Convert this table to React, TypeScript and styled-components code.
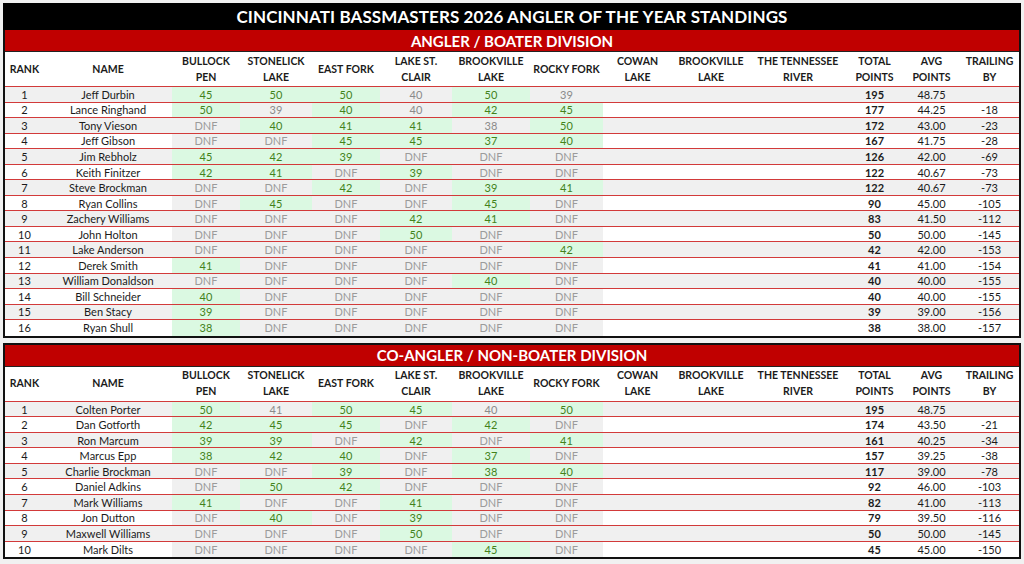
import React from "react";
import styled, { createGlobalStyle } from "styled-components";

const GlobalStyle = createGlobalStyle`
  html, body { margin: 0; padding: 0; background: #f1f1f1; }
  body { font-family: Lato, "Open Sans", Arial, sans-serif; }
  * { box-sizing: border-box; }
`;

const COLS = "39px 128px 68px 72px 68px 72px 78px 73px 69px 78px 96px 57px 57px 1fr";

type Score = number | "DNF";
type Player = {
  name: string;
  scores: Score[];
  counted: boolean[];
  total: number;
  avg: string;
  trail: string;
};

const mk = (name: string, s: Score[], c: string, total: number, avg: string, trail: string): Player => ({
  name,
  scores: s,
  counted: c.split("").map((ch) => ch === "1"),
  total,
  avg,
  trail,
});

const D = "DNF" as const;

const boaters: Player[] = [
  mk("Jeff Durbin", [45, 50, 50, 40, 50, 39], "111010", 195, "48.75", ""),
  mk("Lance Ringhand", [50, 39, 40, 40, 42, 45], "101011", 177, "44.25", "-18"),
  mk("Tony Vieson", [D, 40, 41, 41, 38, 50], "011101", 172, "43.00", "-23"),
  mk("Jeff Gibson", [D, D, 45, 45, 37, 40], "001111", 167, "41.75", "-28"),
  mk("Jim Rebholz", [45, 42, 39, D, D, D], "111000", 126, "42.00", "-69"),
  mk("Keith Finitzer", [42, 41, D, 39, D, D], "110100", 122, "40.67", "-73"),
  mk("Steve Brockman", [D, D, 42, D, 39, 41], "001011", 122, "40.67", "-73"),
  mk("Ryan Collins", [D, 45, D, D, 45, D], "010010", 90, "45.00", "-105"),
  mk("Zachery Williams", [D, D, D, 42, 41, D], "000110", 83, "41.50", "-112"),
  mk("John Holton", [D, D, D, 50, D, D], "000100", 50, "50.00", "-145"),
  mk("Lake Anderson", [D, D, D, D, D, 42], "000001", 42, "42.00", "-153"),
  mk("Derek Smith", [41, D, D, D, D, D], "100000", 41, "41.00", "-154"),
  mk("William Donaldson", [D, D, D, D, 40, D], "000010", 40, "40.00", "-155"),
  mk("Bill Schneider", [40, D, D, D, D, D], "100000", 40, "40.00", "-155"),
  mk("Ben Stacy", [39, D, D, D, D, D], "100000", 39, "39.00", "-156"),
  mk("Ryan Shull", [38, D, D, D, D, D], "100000", 38, "38.00", "-157"),
];

const coAnglers: Player[] = [
  mk("Colten Porter", [50, 41, 50, 45, 40, 50], "101101", 195, "48.75", ""),
  mk("Dan Gotforth", [42, 45, 45, D, 42, D], "111010", 174, "43.50", "-21"),
  mk("Ron Marcum", [39, 39, D, 42, D, 41], "110101", 161, "40.25", "-34"),
  mk("Marcus Epp", [38, 42, 40, D, 37, D], "111010", 157, "39.25", "-38"),
  mk("Charlie Brockman", [D, D, 39, D, 38, 40], "001011", 117, "39.00", "-78"),
  mk("Daniel Adkins", [D, 50, 42, D, D, D], "011000", 92, "46.00", "-103"),
  mk("Mark Williams", [41, D, D, 41, D, D], "100100", 82, "41.00", "-113"),
  mk("Jon Dutton", [D, 40, D, 39, D, D], "010100", 79, "39.50", "-116"),
  mk("Maxwell Williams", [D, D, D, 50, D, D], "000100", 50, "50.00", "-145"),
  mk("Mark Dilts", [D, D, D, D, 45, D], "000010", 45, "45.00", "-150"),
];

const headers: string[][] = [
  ["RANK"],
  ["NAME"],
  ["BULLOCK", "PEN"],
  ["STONELICK", "LAKE"],
  ["EAST FORK"],
  ["LAKE ST.", "CLAIR"],
  ["BROOKVILLE", "LAKE"],
  ["ROCKY FORK"],
  ["COWAN", "LAKE"],
  ["BROOKVILLE", "LAKE"],
  ["THE TENNESSEE", "RIVER"],
  ["TOTAL", "POINTS"],
  ["AVG", "POINTS"],
  ["TRAILING", "BY"],
];

const Page = styled.div`
  width: 1018px;
  margin: 3px 0 0 3px;
  display: flex;
  flex-direction: column;
  gap: 5px;
`;

const Section = styled.section`
  display: flex;
  flex-direction: column;
`;

const TitleBar = styled.div`
  height: 27px;
  background: #000;
  color: #fff;
  font-weight: 700;
  font-size: 17px;
  letter-spacing: 0.1px;
  display: flex;
  align-items: center;
  justify-content: center;
`;

const Panel = styled.div<{ $withTop?: boolean }>`
  border: 2px solid #111;
  border-top: ${(p) => (p.$withTop ? "2px solid #111" : "none")};
  background: #fff;
`;

const DivisionBar = styled.div`
  height: 22px;
  background: #c00000;
  color: #fff;
  font-weight: 700;
  font-size: 15px;
  display: flex;
  align-items: center;
  justify-content: center;
  border-bottom: 1px solid #222;
`;

const HeaderRow = styled.div`
  display: grid;
  grid-template-columns: ${COLS};
  height: 35px;
  background: #fff;
  border-bottom: 1px solid #d23a3a;
`;

const HeadCell = styled.div`
  display: flex;
  flex-direction: column;
  align-items: center;
  justify-content: center;
  font-weight: 700;
  font-size: 10.5px;
  line-height: 16px;
  color: #1b1b1b;
  white-space: nowrap;
  padding-bottom: 1px;
`;

const Row = styled.div<{ $last?: boolean }>`
  display: grid;
  grid-template-columns: ${COLS};
  height: 15.55px;
  border-bottom: ${(p) => (p.$last ? "none" : "1px solid #d23a3a")};
`;

type Kind = "plain" | "win" | "drop";

const Cell = styled.div<{ $kind: Kind; $stripe: boolean; $bold?: boolean; $muted?: boolean }>`
  display: flex;
  align-items: center;
  justify-content: center;
  font-size: 11px;
  line-height: 1;
  white-space: nowrap;
  font-weight: ${(p) => (p.$bold ? 700 : 400)};
  background: ${(p) =>
    p.$kind === "win" ? "#dbf9e2" : p.$kind === "drop" ? "#f0f0f0" : p.$stripe ? "#f0f0f0" : "#fff"};
  color: ${(p) =>
    p.$kind === "win" ? "#43821a" : p.$kind === "drop" ? (p.$muted ? "#9b9b9b" : "#8a8a8a") : "#1b1b1b"};
`;

function Standings({ title, players, withTop }: { title: string; players: Player[]; withTop?: boolean }) {
  return (
    <Panel $withTop={withTop}>
      <DivisionBar>{title}</DivisionBar>
      <HeaderRow>
        {headers.map((h, i) => (
          <HeadCell key={i}>
            {h.map((line, j) => (
              <span key={j}>{line}</span>
            ))}
          </HeadCell>
        ))}
      </HeaderRow>
      {players.map((p, i) => {
        const stripe = i % 2 === 0;
        return (
          <Row key={p.name} $last={i === players.length - 1}>
            <Cell $kind="plain" $stripe={stripe}>{i + 1}</Cell>
            <Cell $kind="plain" $stripe={stripe}>{p.name}</Cell>
            {p.scores.map((s, j) => (
              <Cell
                key={j}
                $kind={p.counted[j] ? "win" : "drop"}
                $stripe={stripe}
                $muted={s === "DNF"}
              >
                {s}
              </Cell>
            ))}
            <Cell $kind="plain" $stripe={stripe} />
            <Cell $kind="plain" $stripe={stripe} />
            <Cell $kind="plain" $stripe={stripe} />
            <Cell $kind="plain" $stripe={stripe} $bold>{p.total}</Cell>
            <Cell $kind="plain" $stripe={stripe}>{p.avg}</Cell>
            <Cell $kind="plain" $stripe={stripe}>{p.trail}</Cell>
          </Row>
        );
      })}
    </Panel>
  );
}

export default function App() {
  return (
    <>
      <GlobalStyle />
      <Page>
        <Section>
          <TitleBar>CINCINNATI BASSMASTERS 2026 ANGLER OF THE YEAR STANDINGS</TitleBar>
          <Standings title="ANGLER / BOATER DIVISION" players={boaters} />
        </Section>
        <Section>
          <Standings title="CO-ANGLER / NON-BOATER DIVISION" players={coAnglers} withTop />
        </Section>
      </Page>
    </>
  );
}
